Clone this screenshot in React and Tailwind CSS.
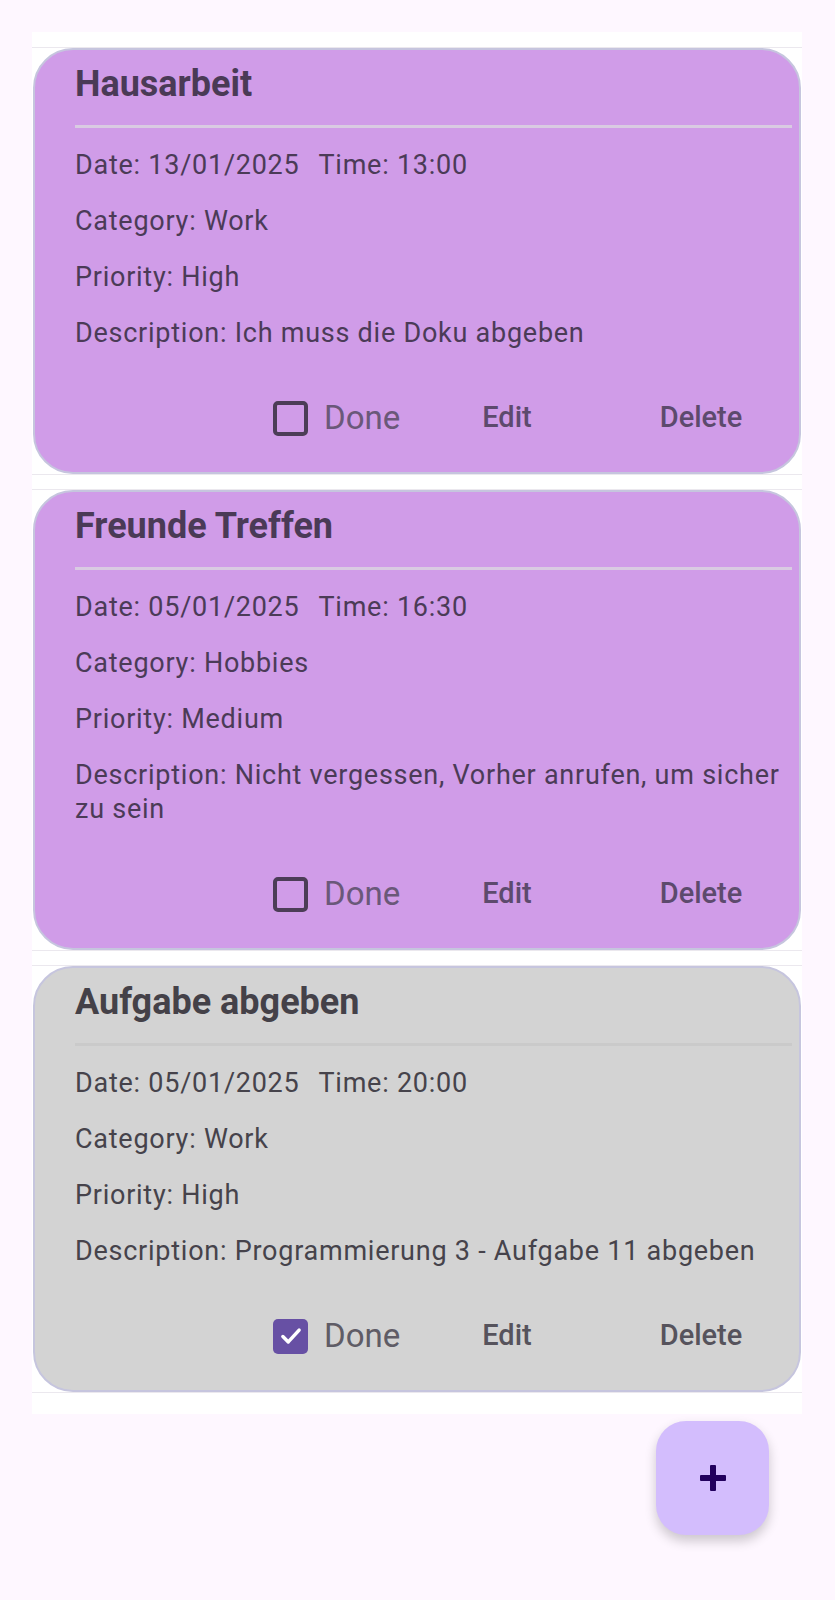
import React from "react";

const tasks = [
  {
    title: "Hausarbeit",
    date: "13/01/2025",
    time: "13:00",
    category: "Work",
    priority: "High",
    description: "Ich muss die Doku abgeben",
    done: false,
  },
  {
    title: "Freunde Treffen",
    date: "05/01/2025",
    time: "16:30",
    category: "Hobbies",
    priority: "Medium",
    description: "Nicht vergessen, Vorher anrufen, um sicher zu sein",
    done: false,
  },
  {
    title: "Aufgabe abgeben",
    date: "05/01/2025",
    time: "20:00",
    category: "Work",
    priority: "High",
    description: "Programmierung 3 - Aufgabe 11 abgeben",
    done: true,
  },
];

function TaskCard({ task }) {
  const d = task.done;
  const text = d ? "text-[#46434b]" : "text-[#4b3b57]";
  const btn = d ? "text-[#56535c]" : "text-[#5d4a6d]";
  return (
    <div className="border-y border-[#ebe8ee] px-[1px]">
      <div
        className={`rounded-[40px] border-2 border-[#c6c5de] pl-[40px] pr-[7px] pt-[13px] pb-[30px] ${
          d ? "bg-[#d3d3d3]" : "bg-[#d09ce8]"
        }`}
      >
        <h2 className={`text-[36px] leading-[42px] font-bold ${d ? "text-[#444148]" : "text-[#4a3a56]"}`}>{task.title}</h2>
        <div className={`mt-[20px] h-[3px] ${d ? "bg-[#cacaca]" : "bg-[#d9cbe2]"}`} />
        <div className={`text-[27px] leading-[34px] tracking-[0.75px] ${text}`}>
          <p className="mt-[20px]">
            <span>Date: {task.date}</span>
            <span className="ml-[19px]">Time: {task.time}</span>
          </p>
          <p className="mt-[22px]">Category: {task.category}</p>
          <p className="mt-[22px]">Priority: {task.priority}</p>
          <p className="mt-[22px]">Description: {task.description}</p>
        </div>
        <div className="mt-[44px] h-[48px] ml-[198px] flex items-center">
          <label className="w-[174px] flex items-center gap-[16px]">
            {d ? (
              <span className="w-[35px] h-[35px] rounded-[5px] bg-[#6750a4] flex items-center justify-center">
                <svg width="26" height="26" viewBox="0 0 24 24" fill="none">
                  <path d="M4.5 12.5l5 5 10-11" stroke="white" strokeWidth="3.2" strokeLinecap="round" strokeLinejoin="round" />
                </svg>
              </span>
            ) : (
              <span className="w-[35px] h-[35px] rounded-[5px] border-[4px] border-[#4c3d57]" />
            )}
            <span className={`text-[33px] leading-[38px] ${d ? "text-[#5f5c66]" : "text-[#6a5879]"}`}>Done</span>
          </label>
          <button className={`w-[120px] text-center text-[29px] font-medium ${btn}`}>Edit</button>
          <button className={`ml-[64px] w-[140px] text-center text-[29px] font-medium ${btn}`}>Delete</button>
        </div>
      </div>
    </div>
  );
}

export default function App() {
  return (
    <div className="min-h-[1600px] bg-[#fef7ff] pt-[32px] font-['Roboto','Liberation_Sans',sans-serif]">
      <div className="ml-[32px] w-[770px] bg-white pt-[15px] pb-[21px] flex flex-col gap-[14px]">
        {tasks.map((t) => (
          <TaskCard key={t.title} task={t} />
        ))}
      </div>
      <div className="flex justify-end pr-[66px] mt-[7px]">
        <button className="w-[113px] h-[114px] rounded-[30px] bg-[#d3bdfd] shadow-[0_6px_12px_rgba(0,0,0,0.2)] flex items-center justify-center">
          <svg width="30" height="30" viewBox="0 0 30 30">
            <rect x="12" y="2" width="6" height="26" rx="1" fill="#22005d" />
            <rect x="2" y="12" width="26" height="6" rx="1" fill="#22005d" />
          </svg>
        </button>
      </div>
    </div>
  );
}
